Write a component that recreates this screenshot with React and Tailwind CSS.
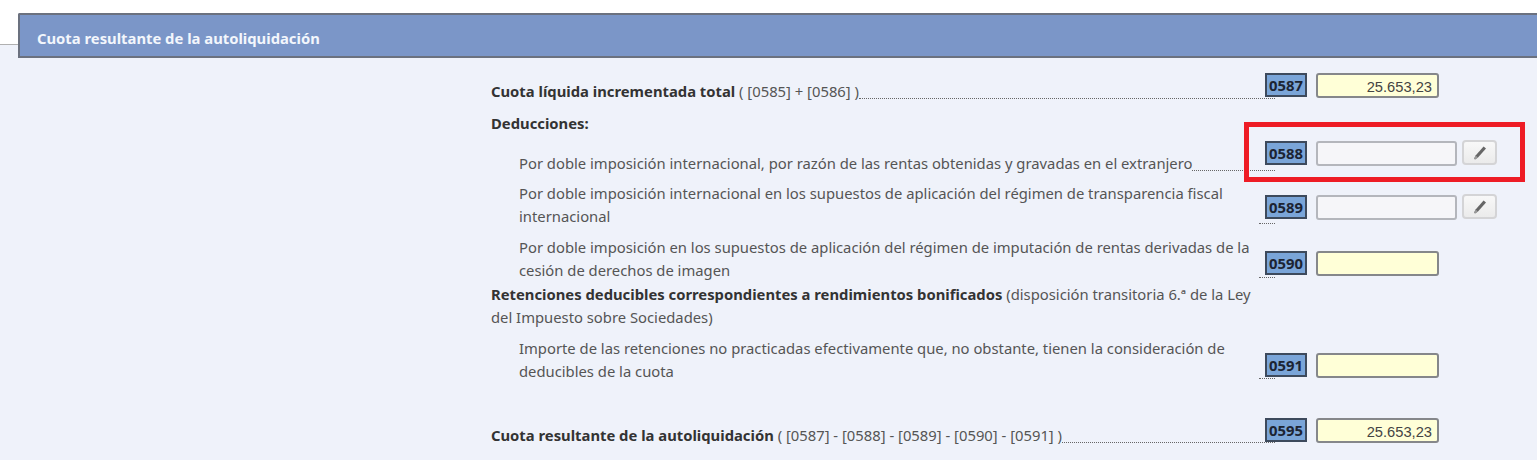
import React from 'react';

function Pencil() {
    return (
        <svg width="16" height="16" viewBox="0 0 16 16">
            <path d="M11.6 1.4 L14 3.6 L6 12.6 L3 14.4 L2.2 13.6 L3.6 10.4 Z" fill="#666" />
            <path d="M3.6 10.4 L6 12.6 L3 14.4 L2.2 13.6 Z" fill="#999" />
        </svg>
    );
}

function Casilla({ code, value, tipo, abajo }) {
    return (
        <div className={`flex items-start ${abajo}`}>
            <div className="relative -ml-[10px] flex h-[24px] w-[42px] items-center justify-center border-2 border-[#3d4a5c] bg-[#7aa5d8] text-[14.8px] font-bold leading-none text-[#1c2433]">
                {code}
            </div>
            {tipo === 'edit' ? (
                <>
                    <div className="ml-[9px] h-[25px] w-[141px] rounded-[3px] border-2 border-[#b4b6bc] bg-[#f6f6f9]" />
                    <button className="ml-[5px] -mt-px flex h-[25px] w-[35px] items-center justify-center rounded-[4px] border-2 border-[#d4d4d6] bg-gradient-to-b from-[#f8f8f8] to-[#ebebeb]">
                        <Pencil />
                    </button>
                </>
            ) : (
                <div className="ml-[9px] h-[25px] w-[123px] rounded-[3px] border-2 border-[#85878a] bg-[#ffffd7] pr-[5px] text-right font-['Liberation_Sans',sans-serif] text-[14.7px] leading-[24px] text-[#444]">
                    {value}
                </div>
            )}
        </div>
    );
}

function Fila({ code, value, tipo, top, sangria, largo, abajo, children }) {
    return (
        <div className={`flex items-end ${top}`}>
            <div className="flex w-[784px] shrink-0 items-end">
                <div className={`mb-px ${largo ? 'min-w-0 flex-1' : 'shrink-0 whitespace-nowrap'} ${sangria ? 'pl-[28px]' : ''}`}>
                    {children}
                </div>
                <div className={`${largo ? 'w-[16px] shrink-0' : 'min-w-0 flex-1'} mb-[5px] border-b border-dotted border-[#666]`} />
            </div>
            <Casilla code={code} value={value} tipo={tipo} abajo={abajo} />
        </div>
    );
}

export default function App() {
    return (
        <div className="relative h-[460px] w-[1537px] overflow-hidden bg-white font-['Noto_Sans',sans-serif] text-[14.8px] leading-[23px] text-[#555]">
            <div className="h-[44px]" />
            <div className="h-[416px] border-t border-[#b0b0b0] bg-[#eff2fa]">
                <div className="-mt-[32px] ml-[18px] flex h-[45px] items-center rounded-tl-[2px] border-2 border-r-0 border-[#6b717f] bg-[#7b96c8] pl-[17px] pt-[6px] font-bold text-[#f3f6fc]">
                    Cuota resultante de la autoliquidación
                </div>
                <div className="pl-[491px]">
                    <Fila code="0587" value="25.653,23" top="mt-[15px]" abajo="mb-[6px]">
                        <b className="text-[#333]">Cuota líquida incrementada total</b> ( [0585] + [0586] )
                    </Fila>
                    <div className="mt-[8px] font-bold text-[#333]">Deducciones:</div>
                    <Fila code="0588" tipo="edit" top="mt-[6px]" abajo="mb-[10px]" sangria>
                        Por doble imposición internacional, por razón de las rentas obtenidas y gravadas en el extranjero
                    </Fila>
                    <Fila code="0589" tipo="edit" top="mt-[6px]" abajo="mb-[9px]" sangria largo>
                        Por doble imposición internacional en los supuestos de aplicación del régimen de transparencia fiscal internacional
                    </Fila>
                    <Fila code="0590" top="mt-[7px]" abajo="mb-[7px]" sangria largo>
                        Por doble imposición en los supuestos de aplicación del régimen de imputación de rentas derivadas de la cesión de derechos de imagen
                    </Fila>
                    <div className="w-[768px]">
                        <b className="text-[#333]">Retenciones deducibles correspondientes a rendimientos bonificados</b> (disposición transitoria 6.ª de la Ley del Impuesto sobre Sociedades)
                    </div>
                    <Fila code="0591" top="mt-[8px]" abajo="mb-[6px]" sangria largo>
                        Importe de las retenciones no practicadas efectivamente que, no obstante, tienen la consideración de deducibles de la cuota
                    </Fila>
                    <Fila code="0595" value="25.653,23" top="mt-[34px]" abajo="mb-[5px]">
                        <b className="text-[#333]">Cuota resultante de la autoliquidación</b> ( [0587] - [0588] - [0589] - [0590] - [0591] )
                    </Fila>
                </div>
            </div>
            {/* recuadro rojo sobre la casilla 0588 */}
            <div className="absolute left-[1244px] top-[122px] h-[60px] w-[281px] border-[5px] border-[#ee1c25]" />
        </div>
    );
}
